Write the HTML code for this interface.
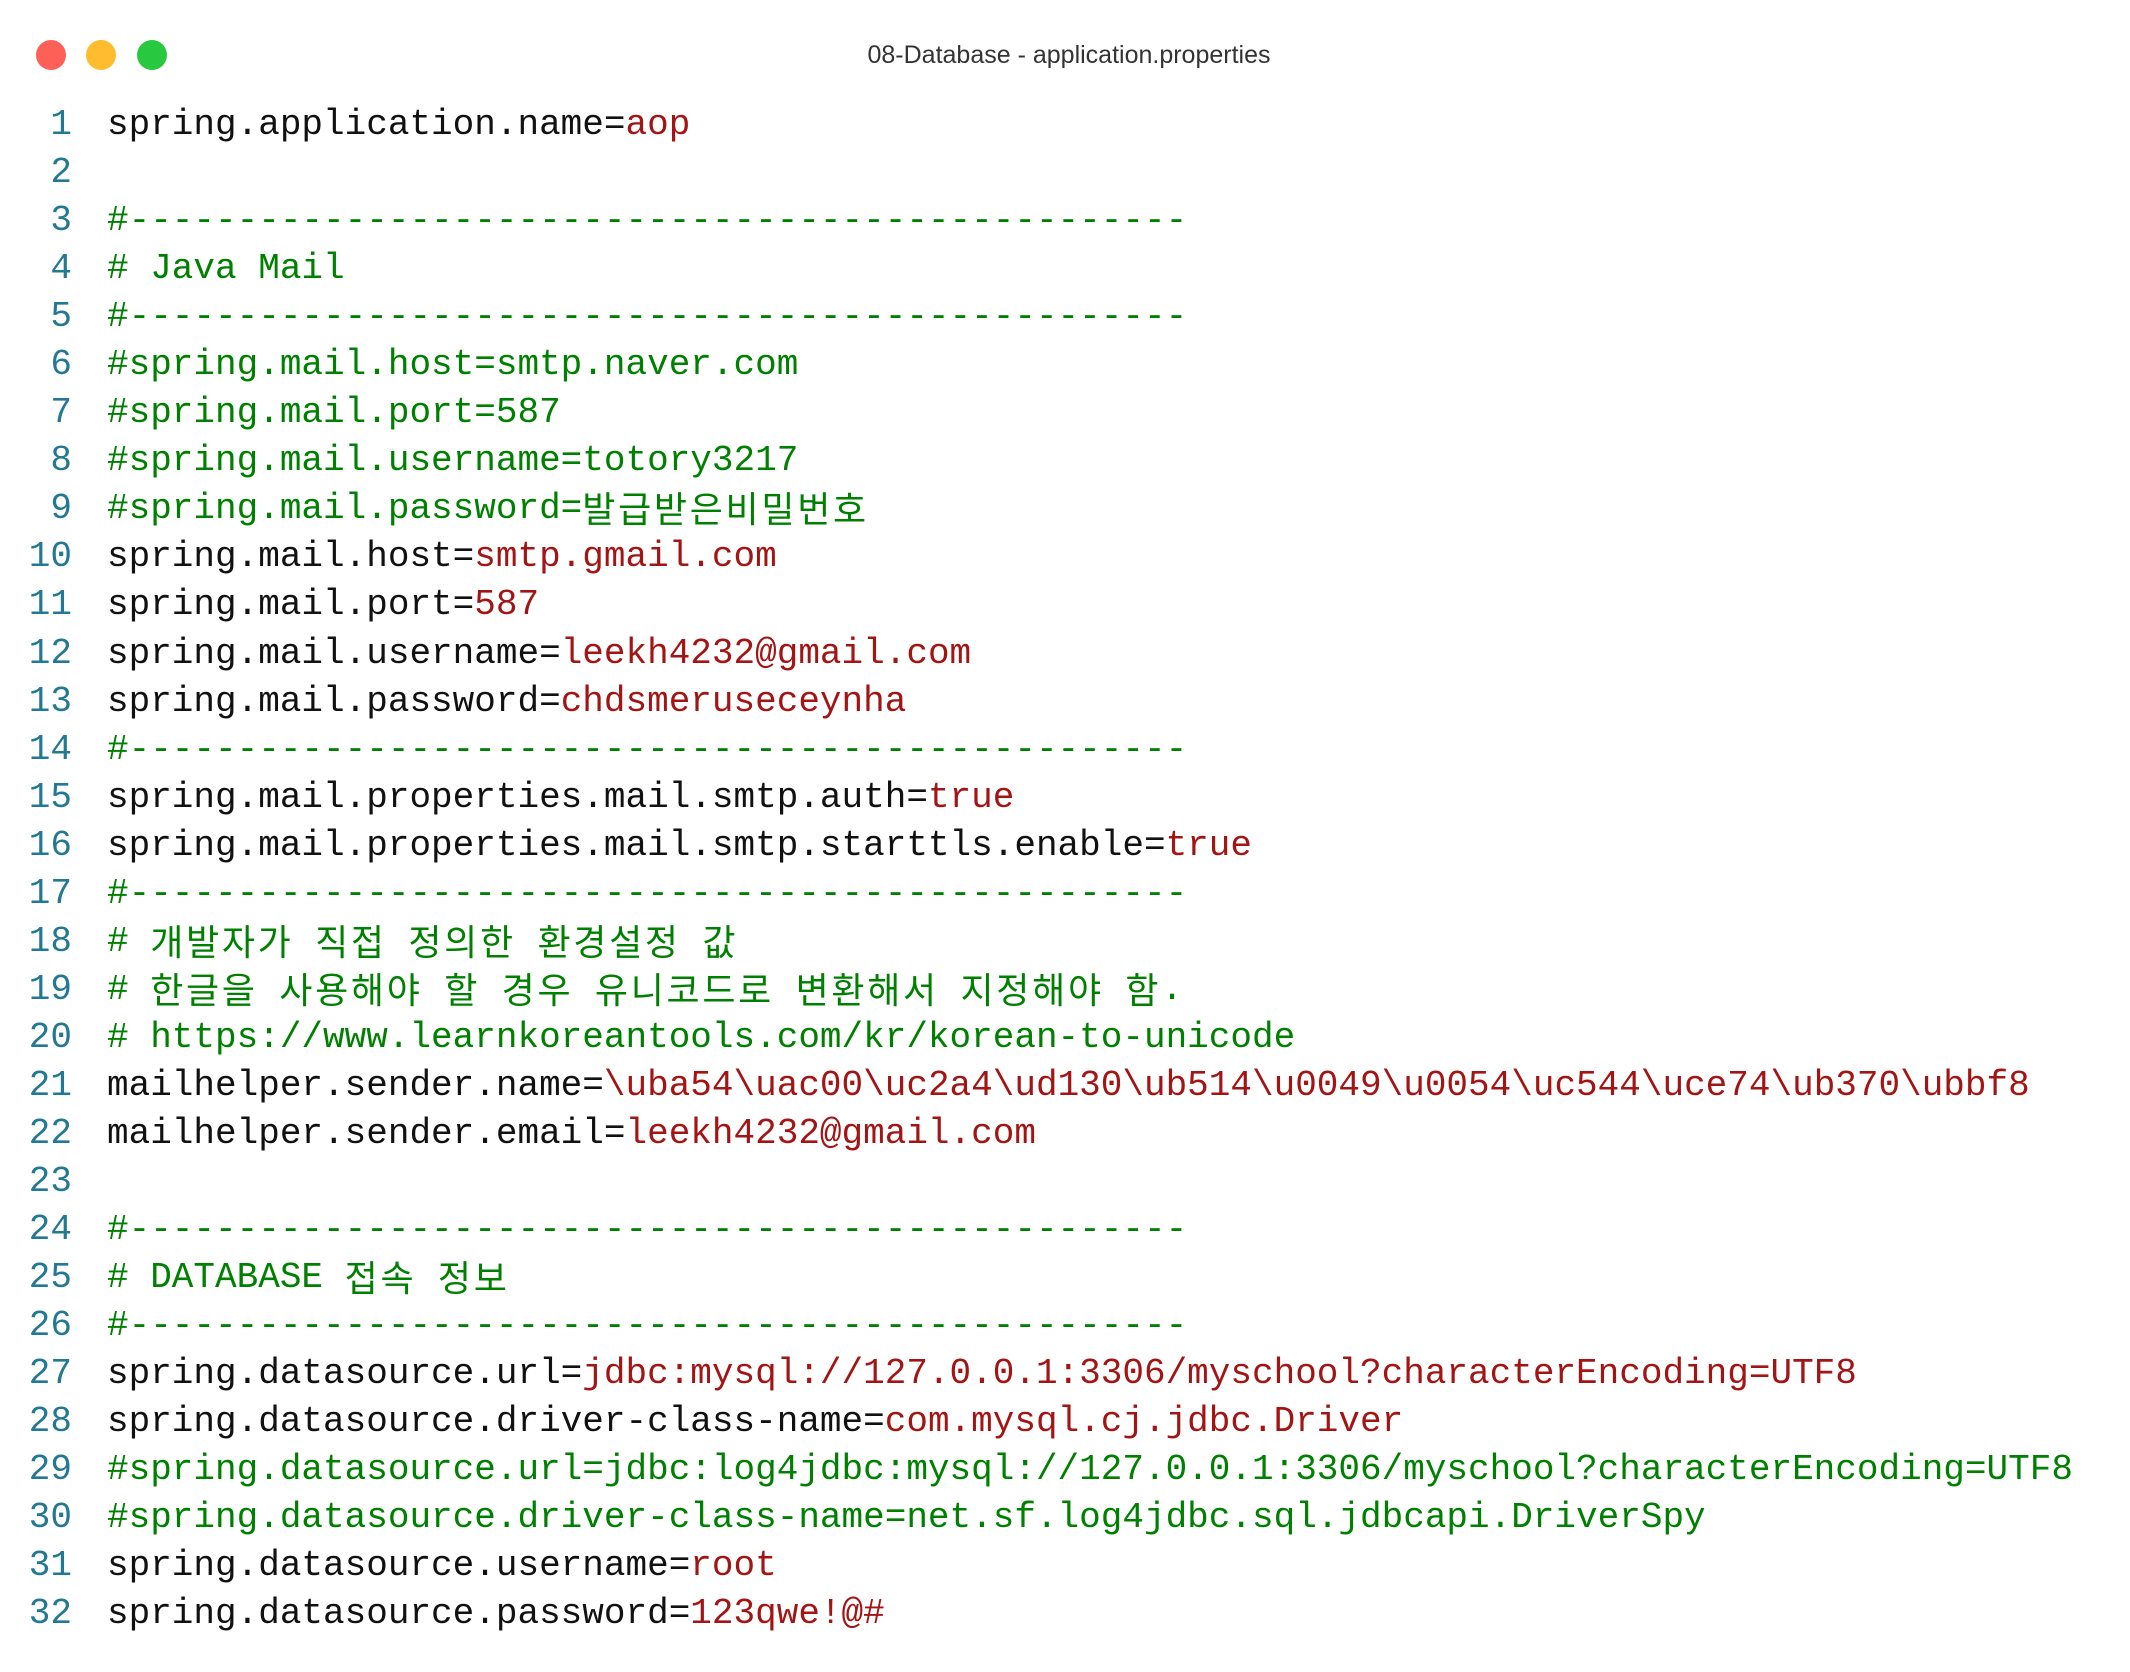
<!DOCTYPE html>
<html><head><meta charset="utf-8"><style>
html,body{margin:0;padding:0;background:#fff;width:2130px;height:1672px;overflow:hidden}
.dot{position:absolute;top:40px;width:30px;height:30px;border-radius:50%}
.title{position:absolute;top:41px;left:0;width:2138px;text-align:center;font:25px "Liberation Sans",sans-serif;color:#333}
.code{position:absolute;top:101px;left:0;font:36px/48px "Liberation Mono","Noto Sans CJK KR",monospace;color:#111;white-space:pre}
.code>div{height:48.05px;overflow:visible}
.ln{display:inline-block;width:72px;text-align:right;color:#237893;margin-right:35px}
.c{color:#008000}.v{color:#a31515}
.k{font-family:"Noto Sans CJK KR",sans-serif;font-size:36px;letter-spacing:2.7px;line-height:1;display:inline-block;vertical-align:-4px}
</style></head><body>
<div class="dot" style="left:36px;background:#fe5f57"></div>
<div class="dot" style="left:86px;background:#febc2e"></div>
<div class="dot" style="left:137px;background:#28c840"></div>
<div class="title">08-Database - application.properties</div>
<div class="code"><div><span class="ln">1</span>spring.application.name=<span class="v">aop</span></div><div><span class="ln">2</span></div><div><span class="ln">3</span><span class="c">#-------------------------------------------------</span></div><div><span class="ln">4</span><span class="c"># Java Mail</span></div><div><span class="ln">5</span><span class="c">#-------------------------------------------------</span></div><div><span class="ln">6</span><span class="c">#spring.mail.host=smtp.naver.com</span></div><div><span class="ln">7</span><span class="c">#spring.mail.port=587</span></div><div><span class="ln">8</span><span class="c">#spring.mail.username=totory3217</span></div><div><span class="ln">9</span><span class="c">#spring.mail.password=<span class="k">발급받은비밀번호</span></span></div><div><span class="ln">10</span>spring.mail.host=<span class="v">smtp.gmail.com</span></div><div><span class="ln">11</span>spring.mail.port=<span class="v">587</span></div><div><span class="ln">12</span>spring.mail.username=<span class="v">leekh4232@gmail.com</span></div><div><span class="ln">13</span>spring.mail.password=<span class="v">chdsmeruseceynha</span></div><div><span class="ln">14</span><span class="c">#-------------------------------------------------</span></div><div><span class="ln">15</span>spring.mail.properties.mail.smtp.auth=<span class="v">true</span></div><div><span class="ln">16</span>spring.mail.properties.mail.smtp.starttls.enable=<span class="v">true</span></div><div><span class="ln">17</span><span class="c">#-------------------------------------------------</span></div><div><span class="ln">18</span><span class="c"># <span class="k">개발자가</span> <span class="k">직접</span> <span class="k">정의한</span> <span class="k">환경설정</span> <span class="k">값</span></span></div><div><span class="ln">19</span><span class="c"># <span class="k">한글을</span> <span class="k">사용해야</span> <span class="k">할</span> <span class="k">경우</span> <span class="k">유니코드로</span> <span class="k">변환해서</span> <span class="k">지정해야</span> <span class="k">함</span>.</span></div><div><span class="ln">20</span><span class="c"># https://www.learnkoreantools.com/kr/korean-to-unicode</span></div><div><span class="ln">21</span>mailhelper.sender.name=<span class="v">\uba54\uac00\uc2a4\ud130\ub514\u0049\u0054\uc544\uce74\ub370\ubbf8</span></div><div><span class="ln">22</span>mailhelper.sender.email=<span class="v">leekh4232@gmail.com</span></div><div><span class="ln">23</span></div><div><span class="ln">24</span><span class="c">#-------------------------------------------------</span></div><div><span class="ln">25</span><span class="c"># DATABASE <span class="k">접속</span> <span class="k">정보</span></span></div><div><span class="ln">26</span><span class="c">#-------------------------------------------------</span></div><div><span class="ln">27</span>spring.datasource.url=<span class="v">jdbc:mysql://127.0.0.1:3306/myschool?characterEncoding=UTF8</span></div><div><span class="ln">28</span>spring.datasource.driver-class-name=<span class="v">com.mysql.cj.jdbc.Driver</span></div><div><span class="ln">29</span><span class="c">#spring.datasource.url=jdbc:log4jdbc:mysql://127.0.0.1:3306/myschool?characterEncoding=UTF8</span></div><div><span class="ln">30</span><span class="c">#spring.datasource.driver-class-name=net.sf.log4jdbc.sql.jdbcapi.DriverSpy</span></div><div><span class="ln">31</span>spring.datasource.username=<span class="v">root</span></div><div><span class="ln">32</span>spring.datasource.password=<span class="v">123qwe!@#</span></div></div>
</body></html>
